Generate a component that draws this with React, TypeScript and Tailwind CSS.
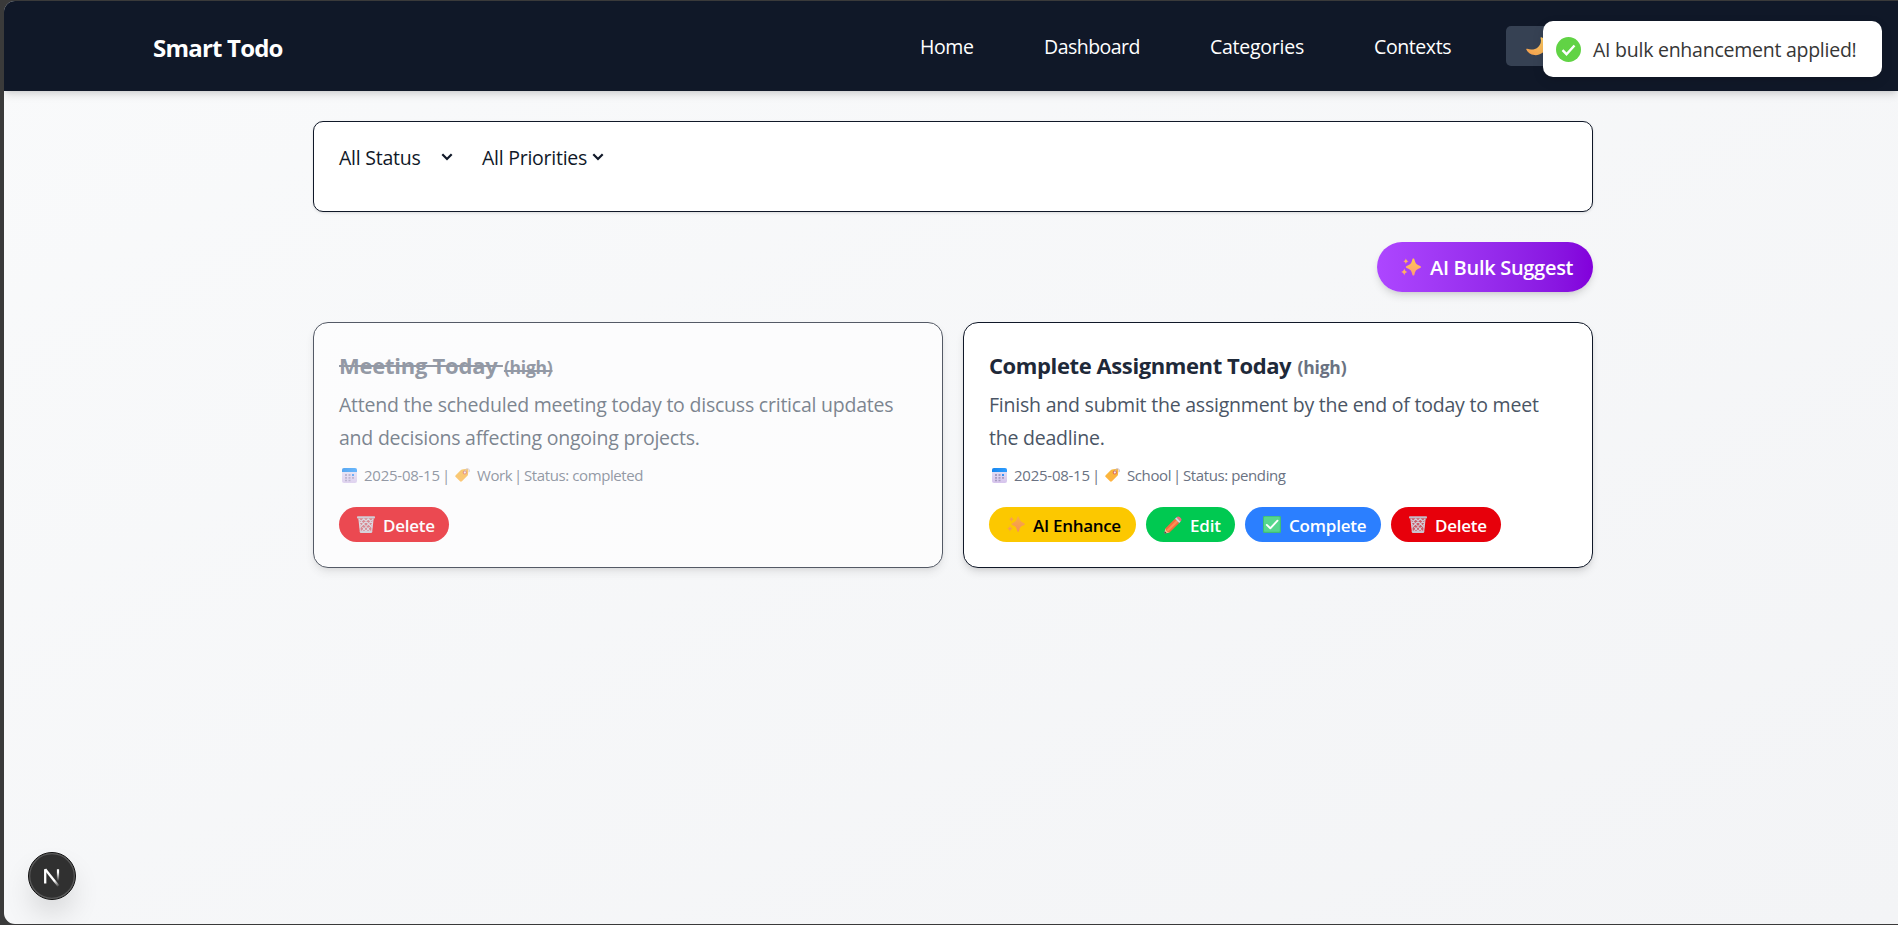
import React, { ReactNode } from 'react';

type IconProps = { className?: string };

function Sparkles({ className, deep = false }: IconProps & { deep?: boolean }) {
  const id = deep ? 'sparkDeep' : 'spark';
  return (
    <svg viewBox="0 0 20 19" className={className}>
      <defs>
        <linearGradient id={id} x1="0" y1="0" x2="0" y2="1">
          <stop offset="0" stopColor={deep ? '#f9b13a' : '#ffc94d'} />
          <stop offset="1" stopColor={deep ? '#f58f5c' : '#ff9a78'} />
        </linearGradient>
      </defs>
      <g fill={`url(#${id})`}>
        <path d="M12.400.6c.7 0 .9.5 1.100 1.200.9 3.600 1.900 4.900 5.100 6 .8.3 1.300.6 1.300 1.200s-.5 1-1.300 1.300c-3.200 1.100-4.200 2.400-5.100 6.100-.2.700-.4 1.200-1.100 1.200s-.9-.5-1.100-1.200c-.9-3.700-1.900-5-5.100-6.100C5.400 10 4.900 9.700 4.900 9s.5-.9 1.300-1.200c3.200-1.100 4.200-2.400 5.100-6 .2-.7.400-1.200 1.100-1.200z" />
        <path d="M4.900.4c.4 1.700 1 2.300 2.700 2.900-1.700.6-2.300 1.200-2.700 3-.4-1.800-1-2.400-2.600-3C3.900 2.700 4.500 2.100 4.900.4z" />
        <path d="M3.300 10.400c.4 2 1.100 2.800 3.100 3.500-2 .7-2.700 1.500-3.100 3.600-.4-2.100-1.200-2.900-3.200-3.600 2-.7 2.800-1.500 3.200-3.500z" />
      </g>
    </svg>
  );
}

function Calendar({ className }: IconProps) {
  return (
    <svg viewBox="0 0 15 15" className={className}>
      <defs>
        <linearGradient id="calBody" x1="0" y1="0" x2="0" y2="1">
          <stop offset="0" stopColor="#e4e6f7" />
          <stop offset="1" stopColor="#d6c3ec" />
        </linearGradient>
        <linearGradient id="calTop" x1="0" y1="0" x2="1" y2="0">
          <stop offset="0" stopColor="#1787ee" />
          <stop offset="1" stopColor="#2f9dff" />
        </linearGradient>
      </defs>
      <rect width="15" height="15" rx="2" fill="url(#calBody)" />
      <path d="M0 4V2a2 2 0 0 1 2-2h11a2 2 0 0 1 2 2v2z" fill="url(#calTop)" />
      <g fill="#a69bc0">
        <path d="M3 6h2v2H3zM6.500 6h2v2h-2zM3 9h2v1.700H3zM6.500 9h2v1.700h-2zM10 9h2v1.700h-2zM3 11.700h2v1.500H3zM6.500 11.700h2v1.500h-2z" />
      </g>
      <path d="M10 6h2v2h-2z" fill="#3b93f5" />
    </svg>
  );
}

function Tag({ className }: IconProps) {
  return (
    <svg viewBox="0 0 15 14" className={className}>
      <defs>
        <linearGradient id="tagBody" x1="0" y1="0" x2="0" y2="1">
          <stop offset="0" stopColor="#f6b73a" />
          <stop offset="1" stopColor="#ffb340" />
        </linearGradient>
      </defs>
      <path d="M7 1.500 11.700.7c1-.1 1.600.5 1.600 1.500l-.3 4.200c0 .5-.2.900-.6 1.300l-5.500 5.500c-.6.600-1.300.6-1.900 0L.7 9.100c-.6-.6-.6-1.300 0-1.900l5-5c.4-.4.800-.6 1.300-.7z" fill="url(#tagBody)" />
      <circle cx="9.800" cy="4.500" r="2" fill="#dc6b57" />
      <circle cx="9.800" cy="4.500" r="1" fill="#fff" />
      <path d="M9.800 4.500c.2-2.500 1.500-4 3-3.800 1.500.1 2 1.900 1.200 3.400" fill="none" stroke="#c5b3c9" strokeWidth=".9" />
    </svg>
  );
}

function Pencil({ className }: IconProps) {
  return (
    <svg viewBox="0 0 18 18" className={className}>
      <path d="M1.300 12.400 5.500 16.600 1.200 17.600c-.6.100-.9-.3-.8-.8z" fill="#f3c193" />
      <path d="M.8 15.300 2.800 17.300 1.200 17.600c-.6.100-.9-.3-.8-.8z" fill="#4b3f4b" />
      <path d="M11 2.700 15.200 6.900 5.500 16.600c-1.800-.4-3.700-2.100-4.200-4.200z" fill="#f36d3c" />
      <path d="M12.400 4.200 14.100 5.800 4.200 15.600 2.600 14.100z" fill="#ff8d55" />
      <path d="M11 2.700 12.500 1.200 16.700 5.400 15.200 6.900z" fill="#d8d0de" />
      <path d="M12.500 1.200c1-1 2.200-1 3.200-.1l1.200 1.200c.9 1 .8 2.100-.2 3.100z" fill="#f4687c" />
    </svg>
  );
}

function CheckBox({ className }: IconProps) {
  return (
    <svg viewBox="0 0 18 17" className={className}>
      <rect width="18" height="17" rx="1.300" fill="#3fbf78" />
      <rect x="1" y=".8" width="15.800" height="15" rx="1" fill="#56d78d" />
      <path d="m3.800 8.900 3.500 3.400 7.200-7.600" fill="none" stroke="#fff" strokeWidth="1.900" strokeLinecap="round" strokeLinejoin="round" />
    </svg>
  );
}

function Trash({ className }: IconProps) {
  return (
    <svg viewBox="0 0 18 17" className={className}>
      <path d="M1.800 2.500h14.400L14.700 16H3.300z" fill="#b7a5b4" fillOpacity=".55" />
      <g fill="none" stroke="#d3ccd6" strokeWidth="1.100">
        <path d="m2 3 11.500 12.500M6.500 2.500l8.500 9M11 2.500l4.800 5M2.800 8l7 8M16 3 4.500 15.500M11.500 2.500 3 11.500M7 2.500 2.300 7.500M15.200 8l-7 8" />
        <path d="M1.900 2.500 3.400 16M16.100 2.500 14.600 16" />
      </g>
      <rect y=".3" width="18" height="2.300" rx=".8" fill="#c2bcc6" />
      <rect x="2.800" y="14.800" width="12.400" height="2.100" rx=".8" fill="#c9c3cd" />
    </svg>
  );
}

function Moon({ className }: IconProps) {
  return (
    <svg viewBox="0 0 22 19" className={className}>
      <defs>
        <linearGradient id="moon" x1="0" y1="1" x2="1" y2="0">
          <stop offset="0" stopColor="#f29a4a" />
          <stop offset="1" stopColor="#ffd267" />
        </linearGradient>
      </defs>
      <path d="M15.500.3c4 1.800 5.500 5.800 4.500 10-1.200 5-6 8.300-11.600 7.800C4.500 17.800 1.500 15.600.3 12.600c-.3-.7.300-1.100.9-.8 3.700 1.500 8.100.9 11-1.900 2.400-2.400 3.400-5.500 2.400-8.700-.2-.6.300-1.200.9-.9z" fill="url(#moon)" />
    </svg>
  );
}

function Chevron({ className }: IconProps) {
  return (
    <svg viewBox="0 0 12 8" className={className}>
      <path d="m1.300 1.300 4.700 4.700 4.700-4.700" fill="none" stroke="#101828" strokeWidth="2.200" />
    </svg>
  );
}

function NextMark({ className }: IconProps) {
  return (
    <svg viewBox="0 0 48 48" className={className}>
      <defs>
        <linearGradient id="stem" x1="0" y1="18" x2="0" y2="29" gradientUnits="userSpaceOnUse">
          <stop offset="0.200" stopColor="#fff" />
          <stop offset="1" stopColor="#fff" stopOpacity="0" />
        </linearGradient>
        <linearGradient id="slash" x1="24" y1="24" x2="32" y2="34" gradientUnits="userSpaceOnUse">
          <stop offset="0.400" stopColor="#fff" />
          <stop offset="1" stopColor="#fff" stopOpacity="0" />
        </linearGradient>
      </defs>
      <circle cx="24" cy="24" r="23.500" fill="#303030" stroke="#111" />
      <circle cx="24" cy="24" r="22.300" fill="none" stroke="#5a5a5a" strokeWidth="1.200" />
      <path d="M17.200 31.500V17.300" stroke="#fff" strokeWidth="2.300" />
      <path d="M17.200 17.200 30.500 34" stroke="url(#slash)" strokeWidth="2.300" />
      <path d="M30 17.300v12" stroke="url(#stem)" strokeWidth="2.200" />
    </svg>
  );
}

function PillButton({ icon, label, className, labelClass }: { icon: ReactNode; label: string; className: string; labelClass: string }) {
  return (
    <button className={`flex h-[35px] items-center rounded-full pl-[18px] text-[17px] font-semibold ${className}`}>
      {icon}
      <span className={`ml-2 whitespace-nowrap pt-0.5 leading-none ${labelClass}`}>{label}</span>
    </button>
  );
}

const NAV = [
  { label: 'Home', style: 'w-[124px] tracking-[-0.400px]' },
  { label: 'Dashboard', style: 'w-[166px] tracking-[-0.520px]' },
  { label: 'Categories', style: 'w-[164px] tracking-[-0.250px]' },
  { label: 'Contexts', style: 'w-[132px] tracking-[-0.400px]' },
];

function Meta({ category, categoryClass, status }: { category: string; categoryClass: string; status: string }) {
  return (
    <p className="mt-[11px] flex h-5 items-center whitespace-nowrap pl-[3px] text-[15px] tracking-[-0.400px] text-[#6a7282]">
      <Calendar className="h-[15px] w-[15px]" />
      <span className="ml-[7px] w-[77px] tracking-[-0.250px]">2025-08-15</span>
      <span className="w-[14px] pl-px">|</span>
      <Tag className="h-[14px] w-[15px]" />
      <span className={`ml-[7px] ${categoryClass}`}>{category}</span>
      <span className="w-[10px]">|</span>
      <span>Status: {status}</span>
    </p>
  );
}

export default function App() {
  return (
    <div className="flex h-[925px] w-[1898px] overflow-hidden bg-[#3a3a3a] pb-px pl-1 pt-px font-['Open_Sans','Noto_Sans',sans-serif]">
      <div className="relative flex w-full flex-col overflow-hidden rounded-l-[11px] bg-linear-to-br from-[#f9fafb] to-[#f3f4f6]">
        <nav className="flex h-[90px] shrink-0 items-center bg-[#101828] pl-[149px] text-white shadow-[0_5px_8px_-1px_rgba(0,0,0,0.120),0_2px_5px_-2px_rgba(0,0,0,0.100)]">
          <span className="w-[767px] pt-[3px] text-[24px] font-bold tracking-[-0.800px]">Smart Todo</span>
          {NAV.map((n) => (
            <a key={n.label} className={`pt-0.5 text-[19.500px] font-medium ${n.style}`}>{n.label}</a>
          ))}
          <button className="flex h-10 w-[62px] items-center rounded-[5px] bg-[#364153] pl-5">
            <Moon className="h-[19px] w-[22px]" />
          </button>
        </nav>

        <main className="ml-[309px] mt-[30px] flex w-[1280px] flex-col">
          <section className="flex h-[91px] items-start rounded-[10px] border border-[#101828] bg-white pl-[25px] pt-[22px] text-[19.500px] leading-7 text-[#101828] shadow-[0_1px_3px_rgba(0,0,0,0.120)]">
            <div className="flex w-[143px] items-center">
              <span className="w-[102px] tracking-[-0.250px]">All Status</span>
              <Chevron className="mb-0.5 h-2 w-3" />
            </div>
            <div className="flex items-center">
              <span className="w-[110px] whitespace-nowrap tracking-[-0.250px]">All Priorities</span>
              <Chevron className="mb-0.5 h-2 w-3" />
            </div>
          </section>

          <button className="mt-[30px] flex h-[50px] w-[216px] items-center self-end rounded-full bg-linear-to-r from-[#ad46ff] to-[#8200db] pl-6 text-white shadow-[0_5px_8px_-1px_rgba(0,0,0,0.120),0_2px_5px_-2px_rgba(0,0,0,0.100)]">
            <Sparkles className="h-[19px] w-5" />
            <span className="ml-[9px] whitespace-nowrap pt-0.5 text-[20px] font-semibold tracking-[-0.300px]">AI Bulk Suggest</span>
          </button>

          <div className="mt-[30px] grid grid-cols-2 gap-5">
            <article className="h-[246px] rounded-[15px] border border-[#101828] bg-white pl-[25px] pt-[25px] opacity-70 shadow-[0_5px_8px_-1px_rgba(0,0,0,0.120),0_2px_5px_-2px_rgba(0,0,0,0.100)]">
              <h2 className="h-9 whitespace-nowrap text-[22px] font-bold leading-[34px] tracking-[-0.250px] text-[#6a7282] line-through">
                Meeting Today <span className="pl-px text-[17.500px]">(high)</span>
              </h2>
              <p className="mt-1 whitespace-nowrap text-[19.500px] leading-[33px] tracking-[-0.220px] text-[#4a5565]">
                Attend the scheduled meeting today to discuss critical updates
                <br />
                and decisions affecting ongoing projects.
              </p>
              <Meta category="Work" categoryClass="w-[37px]" status="completed" />
              <div className="mt-[22px] flex">
                <PillButton icon={<Trash className="h-[17px] w-[18px]" />} label="Delete" labelClass="tracking-[-0.250px]" className="w-[110px] bg-[#e7000b] text-white" />
              </div>
            </article>

            <article className="h-[246px] rounded-[15px] border border-[#101828] bg-white pl-[25px] pt-[25px] shadow-[0_5px_8px_-1px_rgba(0,0,0,0.120),0_2px_5px_-2px_rgba(0,0,0,0.100)]">
              <h2 className="h-9 whitespace-nowrap text-[22px] font-bold leading-[34px] tracking-[-0.400px] text-[#1e2939]">
                Complete Assignment Today <span className="pl-px text-[17.500px] tracking-[-0.200px] text-[#6a7282]">(high)</span>
              </h2>
              <p className="mt-1 whitespace-nowrap text-[19.500px] leading-[33px] tracking-[-0.220px] text-[#4a5565]">
                Finish and submit the assignment by the end of today to meet
                <br />
                the deadline.
              </p>
              <Meta category="School" categoryClass="w-[46px]" status="pending" />
              <div className="mt-[22px] flex gap-[10px]">
                <PillButton icon={<Sparkles deep className="h-[17px] w-[18px]" />} label="AI Enhance" labelClass="tracking-[-0.300px]" className="w-[147px] bg-[#fcc800] text-black" />
                <PillButton icon={<Pencil className="h-[18px] w-[18px]" />} label="Edit" labelClass="tracking-[-0.200px]" className="w-[89px] bg-[#00c951] text-white" />
                <PillButton icon={<CheckBox className="h-[17px] w-[18px]" />} label="Complete" labelClass="tracking-[-0.200px]" className="w-[136px] bg-[#2b7fff] text-white" />
                <PillButton icon={<Trash className="h-[17px] w-[18px]" />} label="Delete" labelClass="tracking-[-0.250px]" className="w-[110px] bg-[#e7000b] text-white" />
              </div>
            </article>
          </div>
        </main>

        <div className="absolute right-4 top-5 flex h-14 w-[339px] items-center rounded-[10px] bg-white pl-[13px] text-[#363636] shadow-[0_4px_12px_rgba(0,0,0,0.100)]">
          <svg viewBox="0 0 25 25" className="h-[25px] w-[25px]">
            <circle cx="12.500" cy="12.500" r="12.500" fill="#61d345" />
            <path d="m6.500 13.200 4 4 8-8.700" fill="none" stroke="#fff" strokeWidth="2.400" />
          </svg>
          <span className="ml-3 whitespace-nowrap pt-0.5 text-[19.500px] tracking-[-0.250px]">AI bulk enhancement applied!</span>
        </div>

        <div className="absolute bottom-6 left-[23.500px] h-12 w-12 rounded-full shadow-[0_16px_32px_-8px_rgba(0,0,0,0.240)]">
          <NextMark className="h-12 w-12" />
        </div>
      </div>
    </div>
  );
}
